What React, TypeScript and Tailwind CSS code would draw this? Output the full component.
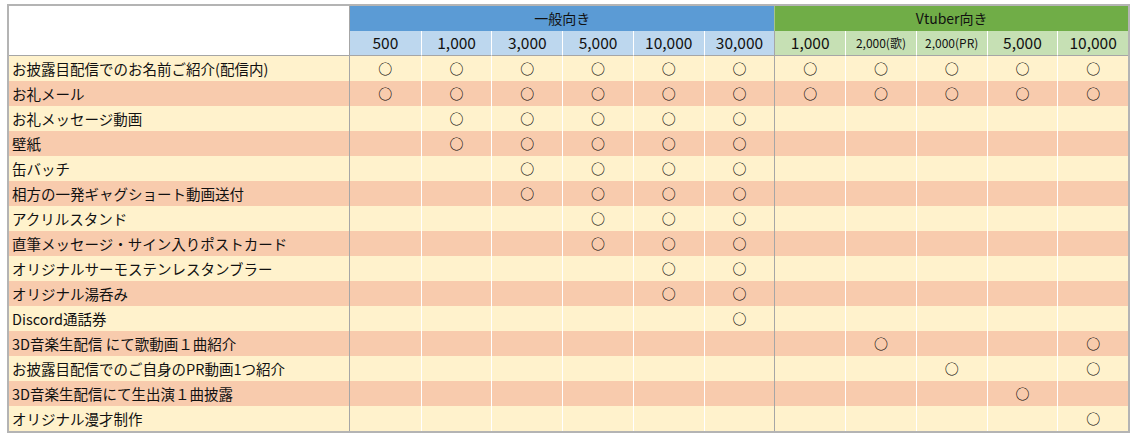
const general = ["500", "1,000", "3,000", "5,000", "10,000", "30,000"];
const vtuber = ["1,000", "2,000(歌)", "2,000(PR)", "5,000", "10,000"];

// marks: 11 columns, general (6) then vtuber (5)
const rows: { label: string; marks: number[] }[] = [
  { label: "お披露目配信でのお名前ご紹介(配信内)", marks: [0, 1, 2, 3, 4, 5, 6, 7, 8, 9, 10] },
  { label: "お礼メール", marks: [0, 1, 2, 3, 4, 5, 6, 7, 8, 9, 10] },
  { label: "お礼メッセージ動画", marks: [1, 2, 3, 4, 5] },
  { label: "壁紙", marks: [1, 2, 3, 4, 5] },
  { label: "缶バッチ", marks: [2, 3, 4, 5] },
  { label: "相方の一発ギャグショート動画送付", marks: [2, 3, 4, 5] },
  { label: "アクリルスタンド", marks: [3, 4, 5] },
  { label: "直筆メッセージ・サイン入りポストカード", marks: [3, 4, 5] },
  { label: "オリジナルサーモステンレスタンブラー", marks: [4, 5] },
  { label: "オリジナル湯呑み", marks: [4, 5] },
  { label: "Discord通話券", marks: [5] },
  { label: "3D音楽生配信 にて歌動画１曲紹介", marks: [7, 10] },
  { label: "お披露目配信でのご自身のPR動画1つ紹介", marks: [8, 10] },
  { label: "3D音楽生配信にて生出演１曲披露", marks: [9] },
  { label: "オリジナル漫才制作", marks: [10] },
];

const cols = Array.from({ length: 11 }, (_, i) => i);

export default function App() {
  return (
    <div className="min-h-screen bg-white pl-[7px] pt-[4px] text-[#111] [font-family:'Noto_Sans_CJK_JP','Noto_Sans',sans-serif]">
      <div className="grid w-[1123px] grid-cols-[341px_repeat(11,minmax(0,1fr))] border-2 border-[#b4b4b4]">
        {/* header */}
        <div className="row-span-2 border-b border-r border-[#a6a6a6] bg-white" />
        <div className="col-span-6 flex h-[25px] items-center justify-center bg-[#5b9bd5] text-[14px]">
          一般向き
        </div>
        <div className="col-span-5 flex h-[25px] items-center justify-center border-l border-[#a6c48c] bg-[#70ad47] text-[14px]">
          Vtuber向き
        </div>
        {general.map((g, i) => (
          <div
            key={"g" + i}
            className={
              "flex h-[25px] items-center justify-center border-b border-[#a6a6a6] bg-[#bdd7ee] text-[15.5px] " +
              (i > 0 ? "border-l border-l-white" : "")
            }
          >
            {g}
          </div>
        ))}
        {vtuber.map((v, i) => (
          <div
            key={"v" + i}
            className={
              "flex h-[25px] items-center justify-center border-b border-[#a6a6a6] bg-[#c6e0b4] " +
              (v.includes("(") ? "text-[12px] " : "text-[15.5px] ") +
              (i > 0 ? "border-l border-l-white" : "border-l border-l-[#a6a6a6]")
            }
          >
            {v}
          </div>
        ))}

        {/* body */}
        {rows.map((r, ri) => {
          const bg = ri % 2 === 0 ? "bg-[#fff2cc]" : "bg-[#f8cbad]";
          return (
            <div key={ri} className="contents">
              <div className={"flex h-[25px] items-center border-r border-[#a6a6a6] pl-[3px] text-[14.5px] " + bg}>
                {r.label}
              </div>
              {cols.map((c) => (
                <div
                  key={c}
                  className={
                    "flex h-[25px] items-center justify-center text-[14px] font-medium text-black " +
                    bg +
                    (c === 0 ? "" : c === 6 ? " border-l border-[#a6a6a6]" : " border-l border-white")
                  }
                >
                  {r.marks.includes(c) ? "○" : ""}
                </div>
              ))}
            </div>
          );
        })}
      </div>
    </div>
  );
}
